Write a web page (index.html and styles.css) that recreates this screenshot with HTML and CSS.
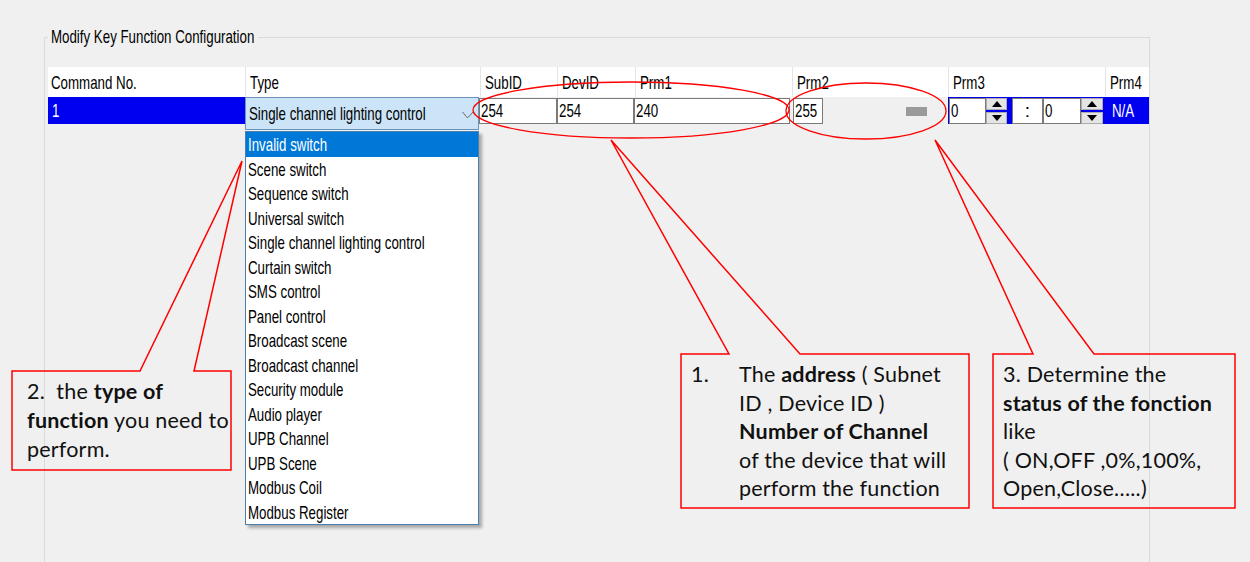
FILE: index.html
```html
<!DOCTYPE html>
<html>
<head>
<meta charset="utf-8">
<link rel="stylesheet" href="styles.css">
</head>
<body>
<fieldset class="group ui">
  <legend><span class="t">Modify Key Function Configuration</span></legend>
  <div class="grid">
    <div class="hrow">
      <div class="hc"><span class="t">Command No.</span></div>
      <div class="hc"><span class="t">Type</span></div>
      <div class="hc"><span class="t">SubID</span></div>
      <div class="hc"><span class="t">DevID</span></div>
      <div class="hc"><span class="t">Prm1</span></div>
      <div class="hc"><span class="t">Prm2</span></div>
      <div class="hc"><span class="t">Prm3</span></div>
      <div class="hc"><span class="t">Prm4</span></div>
    </div>
    <div class="row">
      <div class="c c-no"><span class="t">1</span></div>
      <div class="c c-type">
        <div class="combo">
          <span class="t">Single channel lighting control</span>
          <svg class="chev" width="12" height="8" viewBox="0 0 12 8"><polyline points="0.5,1 5.5,7 11.5,0.5" fill="none" stroke="#6a6a6a" stroke-width="1"/></svg>
        </div>
        <ul class="dropdown">
          <li class="sel"><span class="t">Invalid switch</span></li>
          <li><span class="t">Scene switch</span></li>
          <li><span class="t">Sequence switch</span></li>
          <li><span class="t">Universal switch</span></li>
          <li><span class="t">Single channel lighting control</span></li>
          <li><span class="t">Curtain switch</span></li>
          <li><span class="t">SMS control</span></li>
          <li><span class="t">Panel control</span></li>
          <li><span class="t">Broadcast scene</span></li>
          <li><span class="t">Broadcast channel</span></li>
          <li><span class="t">Security module</span></li>
          <li><span class="t">Audio player</span></li>
          <li><span class="t">UPB Channel</span></li>
          <li><span class="t">UPB Scene</span></li>
          <li><span class="t">Modbus Coil</span></li>
          <li><span class="t">Modbus Register</span></li>
        </ul>
      </div>
      <div class="c"><div class="edit e-sub"><span class="t">254</span></div></div>
      <div class="c"><div class="edit e-dev"><span class="t">254</span></div></div>
      <div class="c"><div class="edit e-prm1"><span class="t">240</span></div></div>
      <div class="c"><div class="edit e-prm2"><span class="t">255</span></div><div class="bar"></div></div>
      <div class="c c-blue">
        <div class="edit e-n1"><span class="t">0</span></div>
        <div class="spin"><span class="up"></span><span class="dn"></span></div>
        <div class="colon">:</div>
        <div class="edit e-n2"><span class="t">0</span></div>
        <div class="spin"><span class="up"></span><span class="dn"></span></div>
      </div>
      <div class="c c-na"><span class="t">N/A</span></div>
    </div>
  </div>
</fieldset>

<svg class="marks" width="1250" height="562" viewBox="0 0 1250 562">
  <ellipse cx="631" cy="110" rx="158" ry="28" fill="none" stroke="#ff0000" stroke-width="1.3"/>
  <ellipse cx="866" cy="111" rx="80" ry="28" fill="none" stroke="#ff0000" stroke-width="1.3"/>
  <path d="M140,371 L12,371 L12,470 L231,470 L231,371 L194,371 L242,161 Z" fill="none" stroke="#ff0000" stroke-width="1.5"/>
  <path d="M729,354 L681,354 L681,508 L969,508 L969,354 L800,354 L611,140 Z" fill="none" stroke="#ff0000" stroke-width="1.5"/>
  <path d="M1033,354 L993,354 L993,508 L1235,508 L1235,354 L1094,354 L935,140 Z" fill="none" stroke="#ff0000" stroke-width="1.5"/>
</svg>

<div class="note n2">2.&nbsp; the <b>type of</b><br><b>function</b> you need to<br>perform.</div>
<div class="note n1"><span class="num">1.</span><span>The <b>address</b> ( Subnet<br>ID , Device ID )<br><b>Number of Channel</b><br>of the device that will<br>perform the function</span></div>
<div class="note n3">3. Determine the<br><b>status of the fonction</b><br>like<br>( ON,OFF ,0%,100%,<br>Open,Close…..)</div>
</body>
</html>
```
FILE: styles.css
```css
* { box-sizing: border-box; }
html, body { margin: 0; padding: 0; }
body {
  width: 1250px;
  height: 562px;
  overflow: hidden;
  background: #f0f0f0;
  position: relative;
}
.ui {
  font-family: "Liberation Sans", Arial, sans-serif;
  font-size: 19px;
  color: #000;
}
/* the UI font of the screenshot is a narrow sans: squeeze the text horizontally */
.t {
  display: inline-block;
  white-space: nowrap;
  transform: scaleX(0.7);
  transform-origin: 0 50%;
}
.group {
  margin: 27px 0 0 44px;
  width: 1106px;
  height: 535px;
  border: 1px solid #dadada;
  border-bottom: none;
  padding: 0 0 0 3px;
  min-width: 0;
}
.group legend {
  width: 210px;
  padding: 0 3px;
  margin: 0;
  height: 20px;
  line-height: 20px;
  white-space: nowrap;
}
.grid { margin-top: 20px; width: 1101px; }
.hrow, .row {
  display: grid;
  grid-template-columns: 197px 235px 77px 78px 157px 156px 157px 44px;
}
.hrow { grid-template-rows: 30px; background: #fff; }
.hc {
  display: flex;
  align-items: center;
  padding: 2px 0 0 4px;
  border-left: 1px solid #e4e4e4;
  min-width: 0;
}
.hc:first-child { border-left: none; padding-left: 3px; }
.row { grid-template-rows: 27px; }
.c { position: relative; display: flex; align-items: flex-start; min-width: 0; }
.c-no {
  background: #0000f0;
  color: #fff;
  padding: 1px 0 0 4px;
  align-items: center;
}
.c-type { z-index: 3; }
.combo {
  width: 234px;
  height: 33px;
  background: #cce4f7;
  border: 1px solid #6b94b8;
  display: flex;
  align-items: center;
  padding: 1px 0 0 3px;
}
.combo .t { flex: 1 1 0; min-width: 0; }
.chev { flex: none; margin-right: 4px; margin-top: 2px; }
.dropdown {
  position: absolute;
  top: 34px;
  left: 0;
  width: 234px;
  margin: 0;
  padding: 0;
  list-style: none;
  background: #fff;
  border: 1px solid #4a7fb0;
  box-shadow: 3px 3px 3px rgba(0, 0, 0, 0.3);
}
.dropdown li {
  height: 24.5px;
  line-height: 23.5px;
  padding: 1px 0 0 2px;
  white-space: nowrap;
}
.dropdown li.sel { background: #0078d7; color: #fff; }
.edit {
  height: 26px;
  margin-top: 1px;
  background: #fff;
  border: 1px solid #7a7a7a;
  padding-left: 1px;
  display: flex;
  align-items: center;
  flex: none;
}
.e-sub { width: 78px; margin-left: -1px; }
.e-dev { width: 77px; }
.e-prm1 { width: 156px; margin-left: -1px; }
.e-prm2 { width: 30px; margin-left: 1px; }
.bar {
  flex: none;
  width: 21px;
  height: 9px;
  margin-left: 83px;
  margin-top: 10px;
  background: #9a9a9a;
}
.c-blue { background: #0000f0; }
.e-n1 { width: 37px; margin-left: 1px; }
.e-n2 { width: 38px; }
.spin {
  flex: none;
  width: 21px;
  height: 26px;
  margin-top: 1px;
  display: flex;
  flex-direction: column;
  justify-content: space-between;
}
.spin + .colon { margin-left: 5px; }
.e-n2 + .spin { width: 22px; }
.spin span {
  height: 12px;
  background: #e4e4e4;
  border: 1px solid #adadad;
  display: flex;
  align-items: center;
  justify-content: center;
}
.spin .up::before {
  content: "";
  border-left: 5px solid transparent;
  border-right: 5px solid transparent;
  border-bottom: 6px solid #000;
}
.spin .dn::before {
  content: "";
  border-left: 5px solid transparent;
  border-right: 5px solid transparent;
  border-top: 6px solid #000;
}
.colon {
  flex: none;
  width: 31px;
  height: 26px;
  margin-top: 1px;
  background: #fff;
  border: 1px solid #7a7a7a;
  display: flex;
  align-items: center;
  justify-content: center;
}
.c-na {
  background: #0000f0;
  color: #fff;
  padding: 1px 0 0 7px;
  align-items: center;
}
.marks {
  position: absolute;
  left: 0;
  top: 0;
  pointer-events: none;
  z-index: 5;
}
.note {
  position: absolute;
  z-index: 6;
  font-family: Lato, "Open Sans", sans-serif;
  font-size: 21.5px;
  letter-spacing: 0.2px;
  line-height: 28.6px;
  color: #111;
  white-space: nowrap;
}
.n2 {
  left: 12px;
  top: 371px;
  width: 219px;
  padding: 6px 0 0 15px;
  line-height: 29px;
}
.n1 {
  left: 681px;
  top: 354px;
  width: 288px;
  padding: 6px 0 0 10px;
  display: flex;
}
.n1 .num { width: 48px; flex: none; }
.n3 {
  left: 993px;
  top: 354px;
  width: 242px;
  padding: 6px 0 0 10px;
}
```
